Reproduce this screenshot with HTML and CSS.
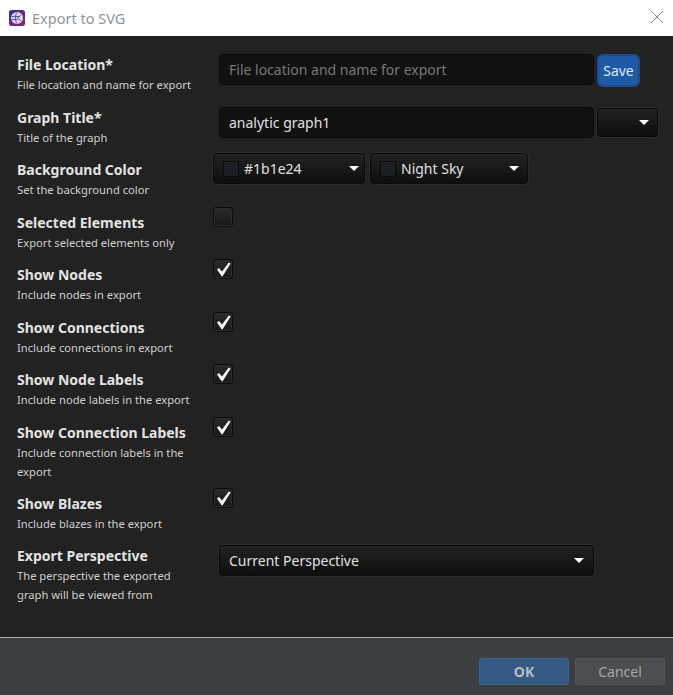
FILE: index.html
```html
<!DOCTYPE html>
<html lang="en">
<head>
<meta charset="utf-8">
<title>Export to SVG</title>
<link rel="stylesheet" href="styles.css">
</head>
<body>
<div class="dialog">
  <header class="titlebar">
    <svg class="logo" width="16" height="16" viewBox="0 0 16 16">
      <defs><linearGradient id="lg" x1="0" y1="0" x2="1" y2="1"><stop offset="0" stop-color="#2b3a8c"/><stop offset="1" stop-color="#a01a80"/></linearGradient></defs>
      <rect width="16" height="16" rx="2.5" fill="url(#lg)"/>
      <circle cx="8" cy="8" r="6" fill="#dcd8ec"/>
      <path d="M2.5 6.5h8M2.5 9.5h6M8 2.5c-2 2-2 9 0 11M12 5L8.5 8l3.5 3" fill="none" stroke="#4f4a8e" stroke-width="0.9"/>
    </svg>
    <span class="wintitle">Export to SVG</span>
    <svg class="close" width="12" height="12" viewBox="0 0 12 12"><path d="M0 0l12 12M12 0L0 12" stroke="#8a8a8a" stroke-width="1" fill="none"/></svg>
  </header>
  <main class="form">
    <div class="row">
      <div class="label"><h3>File Location*</h3><p>File location and name for export</p></div>
      <div class="controls inset">
        <div class="field placeholder">File location and name for export</div>
        <button class="save">Save</button>
      </div>
    </div>
    <div class="row">
      <div class="label"><h3>Graph Title*</h3><p>Title of the graph</p></div>
      <div class="controls inset">
        <div class="field">analytic graph1</div>
        <div class="select small"><span class="caret"></span></div>
      </div>
    </div>
    <div class="row">
      <div class="label"><h3>Background Color</h3><p>Set the background color</p></div>
      <div class="controls lifted">
        <div class="select hex"><span class="swatch"></span><span class="seltext">#1b1e24</span><span class="caret"></span></div>
        <div class="select name"><span class="swatch"></span><span class="seltext">Night Sky</span><span class="caret"></span></div>
      </div>
    </div>
    <div class="row">
      <div class="label"><h3>Selected Elements</h3><p>Export selected elements only</p></div>
      <div class="check"></div>
    </div>
    <div class="row">
      <div class="label"><h3>Show Nodes</h3><p>Include nodes in export</p></div>
      <div class="check"><svg viewBox="0 0 18 18"><path d="M3 9.5L5 8l3 3.5L14.8 2.6 16.6 3.6 8.6 16.2H7.6z"/></svg></div>
    </div>
    <div class="row">
      <div class="label"><h3>Show Connections</h3><p>Include connections in export</p></div>
      <div class="check"><svg viewBox="0 0 18 18"><path d="M3 9.5L5 8l3 3.5L14.8 2.6 16.6 3.6 8.6 16.2H7.6z"/></svg></div>
    </div>
    <div class="row">
      <div class="label"><h3>Show Node Labels</h3><p>Include node labels in the export</p></div>
      <div class="check"><svg viewBox="0 0 18 18"><path d="M3 9.5L5 8l3 3.5L14.8 2.6 16.6 3.6 8.6 16.2H7.6z"/></svg></div>
    </div>
    <div class="row">
      <div class="label"><h3>Show Connection Labels</h3><p>Include connection labels in the export</p></div>
      <div class="check"><svg viewBox="0 0 18 18"><path d="M3 9.5L5 8l3 3.5L14.8 2.6 16.6 3.6 8.6 16.2H7.6z"/></svg></div>
    </div>
    <div class="row">
      <div class="label"><h3>Show Blazes</h3><p>Include blazes in the export</p></div>
      <div class="check"><svg viewBox="0 0 18 18"><path d="M3 9.5L5 8l3 3.5L14.8 2.6 16.6 3.6 8.6 16.2H7.6z"/></svg></div>
    </div>
    <div class="row">
      <div class="label"><h3>Export Perspective</h3><p>The perspective the exported graph will be viewed from</p></div>
      <div class="controls inset">
        <div class="select wide"><span class="seltext">Current Perspective</span><span class="caret"></span></div>
      </div>
    </div>
  </main>
  <footer class="footer">
    <button class="btn ok">OK</button>
    <button class="btn cancel">Cancel</button>
  </footer>
</div>
</body>
</html>
```
FILE: styles.css
```css
* { box-sizing: border-box; }
html, body { margin: 0; padding: 0; }
body { width: 673px; height: 695px; overflow: hidden; background: #222; font-family: "Noto Sans", "Open Sans", sans-serif; color: #e0e0e0; }
.dialog { display: flex; flex-direction: column; height: 695px; }
.titlebar { height: 36px; background: #fff; display: flex; align-items: center; padding: 0 10px 0 9px; flex: none; }
.logo { flex: none; margin-bottom: 1px; }
.wintitle { margin-left: 7px; font-size: 14.5px; color: #8f9499; }
.close { margin-left: auto; margin-bottom: 2px; }
.form { flex: 1; padding: 18px 0 0 17px; background: #222; }
.row { display: flex; min-height: 52.5px; padding-bottom: 12px; }
.label { width: 196px; flex: none; }
.label h3 { margin: 1px 0 0; font-size: 14px; line-height: 20px; font-weight: 700; color: #e2e2e2; }
.label p { margin: 0; font-size: 11.2px; line-height: 19px; color: #cfcfcf; width: 180px; }
.controls { display: flex; }
.inset { margin-left: 6px; gap: 3px; height: 31px; }
.lifted { margin-top: -6px; gap: 5px; height: 31px; }
.field { width: 375px; height: 31px; background: #111; border: 1px solid #0b0b0b; border-radius: 4px; padding: 0 9px; font-size: 14px; line-height: 29px; color: #e0e0e0; }
.placeholder { color: #777; }
.save { width: 43px; height: 33px; background: #1f5aa6; border: 2px solid #1c4c8c; border-radius: 6px; color: #dfe8f2; font: 14px "Noto Sans", sans-serif; padding: 0; }
.select { display: flex; align-items: center; height: 31px; background: linear-gradient(#222, #0e0e0e); border: 1px solid #0a0a0a; box-shadow: 0 0 0 1px #2c2c2c; border-radius: 4px; padding: 0 9px; font-size: 14px; color: #e0e0e0; }
.small { width: 61px; height: 29px; margin-top: 1px; padding-right: 8px; }
.hex { width: 152px; padding-right: 5px; }
.name { width: 158px; padding-right: 8px; }
.wide { width: 375px; }
.swatch { width: 16px; height: 16px; flex: none; background: #1b1e24; border: 1px solid #0a0a0a; margin-right: 5px; }
.caret { margin-left: auto; width: 0; height: 0; border-left: 5px solid transparent; border-right: 5px solid transparent; border-top: 5px solid #fff; }
.seltext { white-space: nowrap; }
.check { width: 20px; height: 20px; margin-top: -5px; background: linear-gradient(#2a2a2a, #181818); border: 1px solid #0c0c0c; border-radius: 3px; box-shadow: 0 0 0 1px #2c2c2c inset; }
.check svg { display: block; width: 18px; height: 18px; }
.check path { fill: #f6f6f6; }
.footer { height: 58px; flex: none; background: #3b3f42; border-top: 1px solid #a9abac; display: flex; justify-content: flex-end; align-items: flex-start; gap: 6px; padding: 20px 8px 0 0; }
.btn { width: 90px; height: 27px; border-radius: 3px; font: 14px "Noto Sans", sans-serif; padding: 0; }
.ok { background: #375a85; border: 1px solid #3e6390; color: #b5bdc6; font-weight: 700; }
.cancel { background: #4b4f51; border: 1px solid #53575a; color: #a5a8aa; }
```
